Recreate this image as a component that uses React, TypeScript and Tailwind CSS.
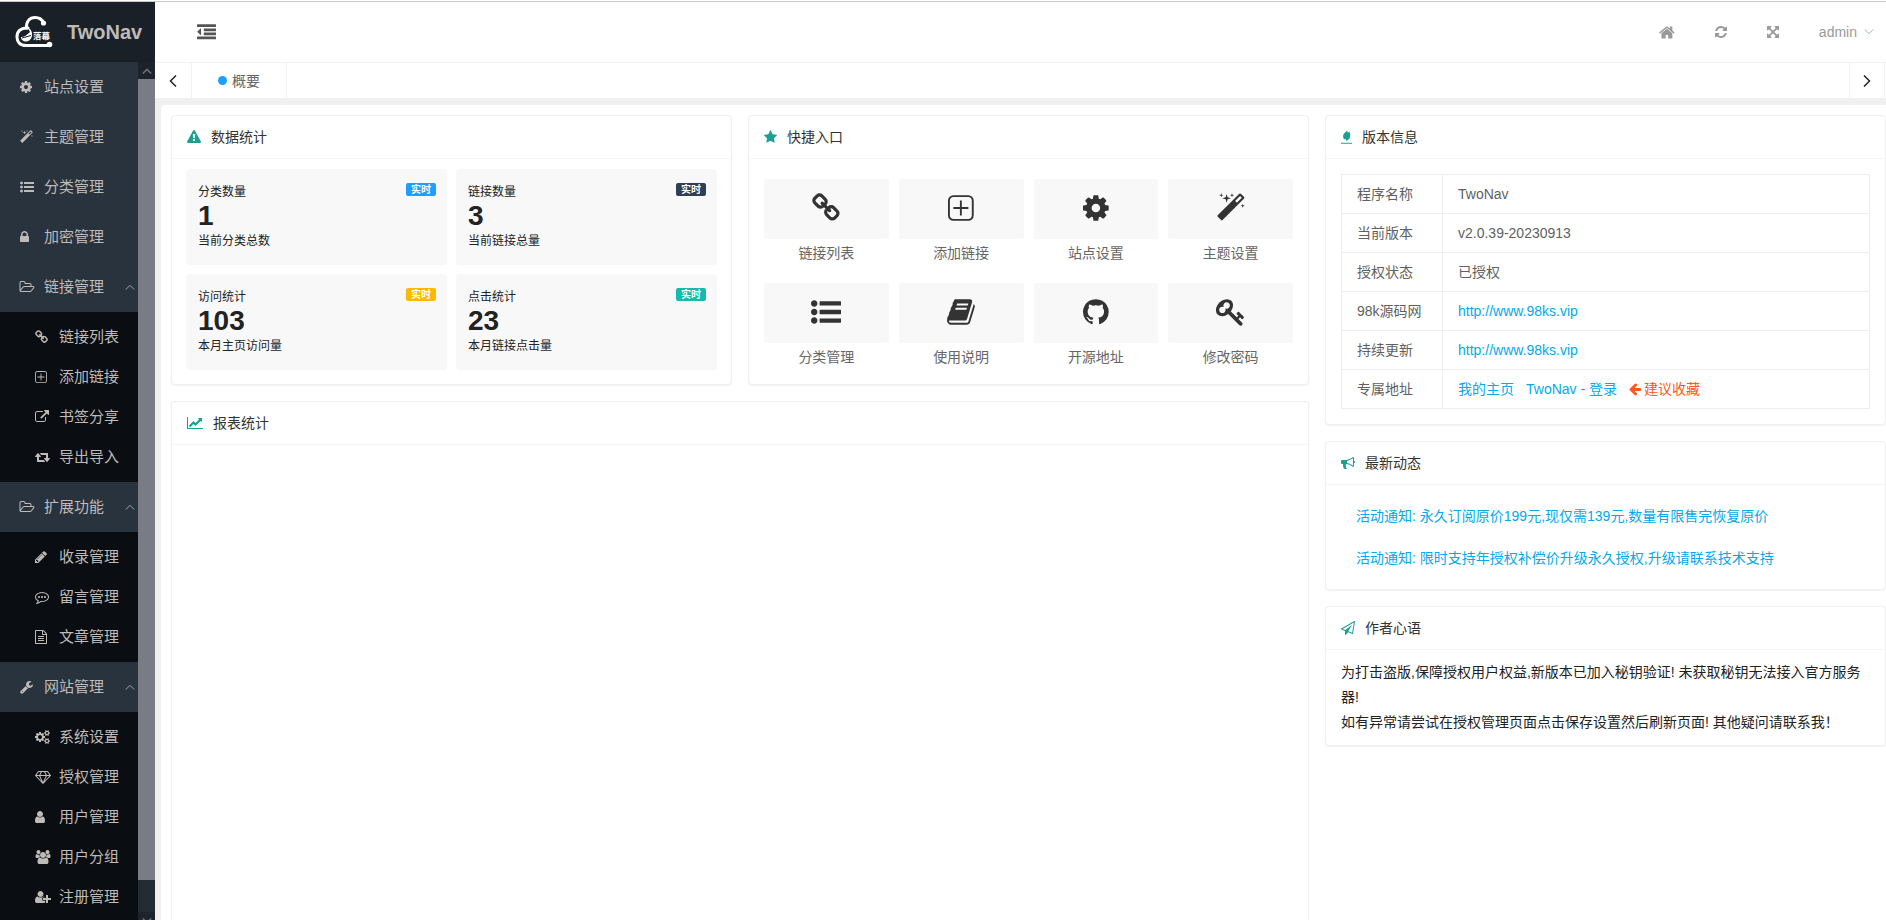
import React from "react";

type Glyph = { x?: number; w: number; d: string };

const G = {
  cog: { x: 128, w: 1536, d: "M1152 896q0-106-75-181t-181-75-181 75-75 181 75 181 181 75 181-75 75-181zm512-109v222q0 12-8 23t-20 13l-185 28q-19 54-39 91 35 50 107 138 10 12 10 25t-9 23q-27 37-99 108t-94 71q-12 0-26-9l-138-108q-44 23-91 38-16 136-29 186-7 28-36 28h-222q-14 0-24.500-8.500t-11.500-21.500l-28-184q-49-16-90-37l-141 107q-10 9-25 9-14 0-25-11-126-114-165-168-7-10-7-23 0-12 8-23 15-21 51-66.500t54-70.500q-27-50-41-99l-183-27q-13-2-21-12.500t-8-23.500v-222q0-12 8-23t19-13l186-28q14-46 39-92-40-57-107-138-10-12-10-24 0-10 9-23 26-36 98.500-107.500t94.500-71.500q13 0 26 10l138 107q44-23 91-38 16-136 29-186 7-28 36-28h222q14 0 24.500 8.500t11.500 21.500l28 184q49 16 90 37l142-107q9-9 24-9 13 0 25 10 129 119 165 170 7 8 7 22 0 12-8 23-15 21-51 66.500t-54 70.500q26 50 41 98l183 28q13 2 21 12.500t8 23.500z" },
  magic: { x: 64, w: 1664, d: "M1254 581l293-293-107-107-293 293zm447-293q0 27-18 45l-1286 1286q-18 18-45 18t-45-18l-198-198q-18-18-18-45t18-45l1286-1286q18-18 45-18t45 18l198 198q18 18 18 45zm-1351-190l98 30-98 30-30 98-30-98-98-30 98-30 30-98zm350 162l196 60-196 60-60 196-60-196-196-60 196-60 60-196zm930 478l98 30-98 30-30 98-30-98-98-30 98-30 30-98zm-640-640l98 30-98 30-30 98-30-98-98-30 98-30 30-98z" },
  list: { w: 1792, d: "M384 1408q0 80-56 136t-136 56-136-56-56-136 56-136 136-56 136 56 56 136zm0-512q0 80-56 136t-136 56-136-56-56-136 56-136 136-56 136 56 56 136zm1408 416v192q0 13-9.500 22.500t-22.500 9.500h-1216q-13 0-22.500-9.500t-9.500-22.500v-192q0-13 9.500-22.500t22.500-9.500h1216q13 0 22.500 9.500t9.500 22.500zm-1408-928q0 80-56 136t-136 56-136-56-56-136 56-136 136-56 136 56 56 136zm1408 416v192q0 13-9.500 22.500t-22.500 9.500h-1216q-13 0-22.500-9.500t-9.500-22.500v-192q0-13 9.500-22.500t22.500-9.500h1216q13 0 22.500 9.500t9.500 22.500zm0-512v192q0 13-9.500 22.500t-22.500 9.500h-1216q-13 0-22.500-9.500t-9.500-22.500v-192q0-13 9.500-22.500t22.500-9.500h1216q13 0 22.500 9.500t9.500 22.500z" },
  lock: { x: 320, w: 1152, d: "M640 768h512v-192q0-106-75-181t-181-75-181 75-75 181v192zm832 96v576q0 40-28 68t-68 28h-960q-40 0-68-28t-28-68v-576q0-40 28-68t68-28h32v-192q0-184 132-316t316-132 316 132 132 316v192h32q40 0 68 28t28 68z" },
  folder: { w: 1856, d: "M1717 931q0-35-53-35h-1088q-40 0-85.500 21.500t-71.500 52.500l-294 363q-18 24-18 40 0 35 53 35h1088q40 0 86-22t71-53l294-363q18-22 18-39zm-1141-163h768v-160q0-40-28-68t-68-28h-576q-40 0-68-28t-28-68v-64q0-40-28-68t-68-28h-320q-40 0-68 28t-28 68v853l256-315q44-53 116-87.500t140-34.500zm1269 163q0 62-46 120l-295 363q-43 53-116 87.500t-140 34.500h-1088q-92 0-158-66t-66-158v-960q0-92 66-158t158-66h320q92 0 158 66t66 158v32h544q92 0 158 66t66 158v160h192q54 0 99 24.500t67 70.500q15 32 15 68z" },
  link: { x: 64, w: 1664, d: "M1520 1216q0-40-28-68l-208-208q-28-28-68-28-42 0-72 32 3 3 19 18.500t21.500 21.500 15 19 13 25.500 3.500 27.500q0 40-28 68t-68 28q-15 0-27.500-3.500t-25.500-13-19-15-21.500-21.500-18.500-19q-33 31-33 73 0 40 28 68l206 207q27 27 68 27 40 0 68-26l147-146q28-28 28-67zm-703-705q0-40-28-68l-206-207q-28-28-68-28-39 0-68 27l-147 146q-28 28-28 67 0 40 28 68l208 208q27 27 68 27 42 0 72-31-3-3-19-18.500t-21.500-21.500-15-19-13-25.500-3.500-27.500q0-40 28-68t68-28q15 0 27.500 3.500t25.500 13 19 15 21.500 21.500 18.500 19q33-31 33-73zm895 705q0 120-85 203l-147 146q-83 83-203 83-121 0-204-85l-206-207q-83-83-83-203 0-123 88-209l-88-88q-86 88-208 88-120 0-204-84l-208-208q-84-84-84-204t85-203l147-146q83-83 203-83 121 0 204 85l206 207q83 83 83 203 0 123-88 209l88 88q86-88 208-88 120 0 204 84l208 208q84 84 84 204z" },
  plus: { x: 128, w: 1536, d: "M448 128h896q133 0 226.500 93.500t93.500 226.500v896q0 133-93.500 226.500t-226.500 93.500h-896q-133 0-226.500-93.500t-93.500-226.500v-896q0-133 93.500-226.500t226.500-93.500zm0 112q-87 0-147.500 60.500t-60.500 147.500v896q0 87 60.500 147.500t147.500 60.500h896q87 0 147.500-60.500t60.500-147.500v-896q0-87-60.500-147.500t-147.500-60.500zm392 208h112v392h392v112h-392v392h-112v-392h-392v-112h392z" },
  external: { w: 1792, d: "M1408 928v320q0 119-84.500 203.500t-203.500 84.500h-832q-119 0-203.500-84.500t-84.500-203.500v-832q0-119 84.500-203.500t203.500-84.500h704q14 0 23 9t9 23v64q0 14-9 23t-23 9h-704q-66 0-113 47t-47 113v832q0 66 47 113t113 47h832q66 0 113-47t47-113v-320q0-14 9-23t23-9h64q14 0 23 9t9 23zm384-864v512q0 26-19 45t-45 19-45-19l-176-176-652 652q-10 10-23 10t-23-10l-114-114q-10-10-10-23t10-23l652-652-176-176q-19-19-19-45t19-45 45-19h512q26 0 45 19t19 45z" },
  retweet: { w: 1920, d: "M1280 1504q0 13-9.500 22.500t-22.500 9.500h-960q-8 0-13.500-2t-9-7-5.500-8-3-11.500-1-11.500v-600h-192q-26 0-45-19t-19-45q0-24 15-41l320-384q19-22 49-22t49 22l320 384q15 17 15 41 0 26-19 45t-45 19h-192v384h576q16 0 25 11l160 192q7 10 7 21zm640-416q0 24-15 41l-320 384q-20 23-49 23t-49-23l-320-384q-15-17-15-41 0-26 19-45t45-19h192v-384h-576q-16 0-25-12l-160-192q-7-9-7-20 0-13 9.500-22.500t22.500-9.500h960q8 0 13.500 2t9 7 5.500 8 3 11.500 1 11.500v600h192q26 0 45 19t19 45z" },
  pencil: { x: 128, w: 1536, d: "M491 1536l91-91-235-235-91 91v107h128v128h107zm523-928q0-22-22-22-10 0-17 7l-542 542q-7 7-7 17 0 22 22 22 10 0 17-7l542-542q7-7 7-17zm-54-192l416 416-832 832h-416v-416zm683 96q0 53-37 90l-166 166-416-416 166-165q36-38 90-38 53 0 91 38l235 234q37 39 37 91z" },
  comment: { w: 1792, d: "M640 896q0 53-37.500 90.500t-90.500 37.500-90.500-37.500-37.500-90.500 37.500-90.500 90.500-37.500 90.500 37.500 37.500 90.500zm384 0q0 53-37.500 90.500t-90.500 37.500-90.500-37.500-37.500-90.500 37.500-90.500 90.500-37.500 90.500 37.500 37.500 90.500zm384 0q0 53-37.500 90.500t-90.500 37.500-90.500-37.500-37.500-90.500 37.500-90.500 90.500-37.500 90.500 37.500 37.500 90.500zm-512-512q-204 0-381.500 69.500t-282 187.500-104.500 255q0 112 71.500 213.500t201.500 175.500l87 50-27 96q-24 91-70 172 152-63 275-171l43-38 57 6q69 8 130 8 204 0 381.500-69.500t282-187.500 104.500-255-104.500-255-282-187.500-381.500-69.500zm896 512q0 174-120 321.500t-326 233-450 85.500q-70 0-145-8-198 175-460 242-49 14-114 22h-5q-15 0-27-10.500t-16-27.500v-1q-3-4-.5-12t2-10 4.500-9.500l6-9 7-8.500 8-9q7-8 31-34.500t34.500-38 31-39.500 32.500-51 27-59 26-76q-157-89-247.500-220t-90.500-281q0-130 71-248.500t191-204.500 286-136.500 348-50.500 348 50.500 286 136.500 191 204.500 71 248.500z" },
  file: { x: 128, w: 1536, d: "M1596 380q28 28 48 76t20 88v1152q0 40-28 68t-68 28h-1344q-40 0-68-28t-28-68v-1600q0-40 28-68t68-28h896q40 0 88 20t76 48zm-444-244v376h376q-10-29-22-41l-313-313q-12-12-41-22zm384 1528v-1024h-416q-40 0-68-28t-28-68v-416h-768v1536h1280zm-1024-864q0-14 9-23t23-9h704q14 0 23 9t9 23v64q0 14-9 23t-23 9h-704q-14 0-23-9t-9-23v-64zm736 224q14 0 23 9t9 23v64q0 14-9 23t-23 9h-704q-14 0-23-9t-9-23v-64q0-14 9-23t23-9h704zm0 256q14 0 23 9t9 23v64q0 14-9 23t-23 9h-704q-14 0-23-9t-9-23v-64q0-14 9-23t23-9h704z" },
  wrench: { x: 64, w: 1664, d: "M448 1472q0-26-19-45t-45-19-45 19-19 45 19 45 45 19 45-19 19-45zm644-420l-682 682q-37 37-90 37-52 0-91-37l-106-108q-38-36-38-90 0-53 38-91l681-681q39 98 114.500 173.500t173.500 114.500zm634-435q0 39-23 106-47 134-164.500 217.500t-258.500 83.500q-185 0-316.500-131.500t-131.500-316.500 131.500-316.500 316.500-131.500q58 0 121.500 16.500t107.500 46.500q16 11 16 28t-16 28l-293 169v224l193 107q5-3 79-48.500t135.500-81 70.500-35.500q15 0 23.500 10t8.500 25z" },
  cogs: { w: 1920, d: "M896 896q0-106-75-181t-181-75-181 75-75 181 75 181 181 75 181-75 75-181zm768 512q0-52-38-90t-90-38-90 38-38 90q0 53 37.500 90.500t90.500 37.500 90.500-37.500 37.500-90.500zm0-1024q0-52-38-90t-90-38-90 38-38 90q0 53 37.500 90.500t90.500 37.500 90.500-37.500 37.500-90.500zm-384 421v185q0 10-7 19.500t-16 10.500l-155 24q-11 35-32 76 34 48 90 115 7 11 7 20 0 12-7 19-23 30-82.500 89.500t-78.500 59.500q-11 0-21-7l-115-90q-37 19-77 31-11 108-23 155-7 24-30 24h-186q-11 0-20-7.500t-10-17.500l-23-153q-34-10-75-31l-118 89q-7 7-20 7-11 0-21-8-144-133-144-160 0-9 7-19 10-14 41-53t47-61q-23-44-35-82l-152-24q-10-1-17-9.500t-7-19.500v-185q0-10 7-19.500t16-10.500l155-24q11-35 32-76-34-48-90-115-7-11-7-20 0-12 7-20 22-30 82-89t79-59q11 0 21 7l115 90q34-18 77-32 11-108 23-154 7-24 30-24h186q11 0 20 7.500t10 17.500l23 153q34 10 75 31l118-89q8-7 20-7 11 0 21 8 144 133 144 160 0 8-7 19-12 16-42 54t-45 60q23 48 34 82l152 23q10 2 17 10.500t7 19.500zm640 533v140q0 16-149 31-12 27-30 52 51 113 51 138 0 4-4 7-122 71-124 71-8 0-46-47t-52-68q-20 2-30 2t-30-2q-14 21-52 68t-46 47q-2 0-124-71-4-3-4-7 0-25 51-138-18-25-30-52-149-15-149-31v-140q0-16 149-31 13-29 30-52-51-113-51-138 0-4 4-7 4-2 35-20t59-34 30-16q8 0 46 46.500t52 67.500q20-2 30-2t30 2q51-71 92-112l6-2q4 0 124 70 4 3 4 7 0 25-51 138 17 23 30 52 149 15 149 31zm0-1024v140q0 16-149 31-12 27-30 52 51 113 51 138 0 4-4 7-122 71-124 71-8 0-46-47t-52-68q-20 2-30 2t-30-2q-14 21-52 68t-46 47q-2 0-124-71-4-3-4-7 0-25 51-138-18-25-30-52-149-15-149-31v-140q0-16 149-31 13-29 30-52-51-113-51-138 0-4 4-7 4-2 35-20t59-34 30-16q8 0 46 46.500t52 67.500q20-2 30-2t30 2q51-71 92-112l6-2q4 0 124 70 4 3 4 7 0 25-51 138 17 23 30 52 149 15 149 31z" },
  diamond: { w: 2048, d: "M212 768l623 665-300-665h-323zm812 772l349-772h-698l349 772zm-486-900l204-384h-262l-288 384h346zm675 793l623-665h-323l-300 665zm-530-793h682l-204-384h-274l-204 384zm827 0h346l-288-384h-262l204 384zm141-486l384 512q14 18 13 41.500t-17 40.500l-960 1024q-18 20-47 20t-47-20l-960-1024q-16-17-17-40.500t13-41.500l384-512q18-26 51-26h1152q33 0 51 26z" },
  user: { x: 256, w: 1280, d: "M1536 1399q0 109-62.500 187t-150.500 78h-854q-88 0-150.500-78t-62.500-187q0-85 8.500-160.500t31.500-152 58.500-131 94-89 134.500-34.500q131 128 313 128t313-128q76 0 134.500 34.500t94 89 58.500 131 31.500 152 8.500 160.500zm-256-887q0 159-112.500 271.500t-271.500 112.500-271.500-112.500-112.500-271.500 112.500-271.500 271.500-112.500 271.500 112.500 112.500 271.500z" },
  users: { w: 2048, d: "M657 896q-162 5-265 128h-134q-82 0-138-40.500t-56-118.500q0-353 124-353 6 0 43.500 21t97.500 42.500 119 21.500q67 0 133-23-5 37-5 66 0 159 81 292zm1071 637q0 120-73 189.500t-194 69.500h-874q-121 0-194-69.500t-73-189.500q0-53 3.500-103.500t14-109 26.500-108.500 43-97.500 62-81 85.500-53.500 111.500-20q10 0 43 21.500t73 48 107 48 135 21.500 135-21.500 107-48 73-48 43-21.500q61 0 111.500 20t85.500 53.500 62 81 43 97.500 26.500 108.500 14 109 3.500 103.500zm-1024-1277q0 106-75 181t-181 75-181-75-75-181 75-181 181-75 181 75 75 181zm704 384q0 159-112.500 271.500t-271.500 112.500-271.500-112.500-112.500-271.500 112.500-271.500 271.500-112.500 271.500 112.500 112.500 271.500zm576 225q0 78-56 118.500t-138 40.500h-134q-103-123-265-128 81-133 81-292 0-29-5-66 66 23 133 23 59 0 119-21.500t97.500-42.500 43.500-21q124 0 124 353zm-128-609q0 106-75 181t-181 75-181-75-75-181 75-181 181-75 181 75 75 181z" },
  userPlus: { w: 2048, d: "M704 896q-159 0-271.500-112.500t-112.500-271.500 112.500-271.500 271.500-112.500 271.500 112.500 112.500 271.500-112.500 271.500-271.500 112.500zm960 128h352q13 0 22.500 9.500t9.500 22.500v192q0 13-9.500 22.500t-22.500 9.500h-352v352q0 13-9.500 22.500t-22.500 9.500h-192q-13 0-22.500-9.500t-9.500-22.500v-352h-352q-13 0-22.500-9.500t-9.500-22.500v-192q0-13 9.500-22.500t22.500-9.500h352v-352q0-13 9.500-22.500t22.500-9.500h192q13 0 22.500 9.500t9.500 22.500v352zm-736 224q0 52 38 90t90 38h256v238q-68 50-171 50h-874q-121 0-194-69t-73-190q0-53 3.500-103.500t14-109 26.500-108.500 43-97.500 62-81 85.500-53.500 111.500-20q19 0 39 17 79 61 154.500 91.500t164.500 30.500 164.500-30.500 154.500-91.500q20-17 39-17 132 0 217 96h-223q-52 0-90 38t-38 90v192z" },
  warning: { w: 1792, d: "M1024 1375v-190q0-14-9.500-23.500t-22.500-9.500h-192q-13 0-22.500 9.500t-9.500 23.500v190q0 14 9.500 23.500t22.500 9.500h192q13 0 22.500-9.500t9.500-23.500zm-2-374l18-459q0-12-10-19-13-11-24-11h-220q-11 0-24 11-10 7-10 21l17 457q0 10 10 16.500t24 6.500h185q14 0 23.500-6.500t10.500-16.500zm-14-934l768 1408q35 63-2 126-17 29-46.500 46t-63.500 17h-1536q-34 0-63.500-17t-46.500-46q-37-63-2-126l768-1408q17-31 47-49t65-18 65 18 47 49z" },
  star: { x: 64, w: 1664, d: "M1728 647q0 22-26 48l-363 354 86 500q1 7 1 20 0 21-10.500 35.500t-30.500 14.500q-19 0-40-12l-449-236-449 236q-22 12-40 12-21 0-31.500-14.500t-10.500-35.500q0-6 2-20l86-500-364-354q-25-27-25-48 0-37 56-46l502-73 225-455q19-41 49-41t49 41l225 455 502 73q56 9 56 46z" },
  chart: { w: 2048, d: "M2048 1536v128h-2048v-1536h128v1408h1920zm-128-1248v435q0 21-19.500 29.500t-35.500-7.500l-121-121-633 633q-10 10-23 10t-23-10l-233-233-416 416-192-192 585-585q10-10 23-10t23 10l233 233 464-464-121-121q-16-16-7.500-35.500t29.500-19.500h435q14 0 23 9t9 23z" },
  fire: { x: 192, w: 1408, d: "M192 1640h1408v128h-1408zM1010 20C985 190 1010 260 1090 360C1150 280 1200 240 1290 190C1260 330 1400 500 1380 760C1360 1060 1140 1290 800 1420C850 1290 830 1200 740 1120C690 1170 640 1200 560 1230C560 1100 440 960 460 740C490 430 740 330 1010 20z" },
  bullhorn: { w: 1792, d: "M1664 640q53 0 90.500 37.500t37.500 90.500-37.500 90.500-90.500 37.500v384q0 52-38 90t-90 38q-417-347-812-380-58 19-91 66t-31 100.500 40 92.500q-20 33-23 65.500t6 58 33.500 55 48 50 61.500 50.500q-29 58-111.500 83t-168.500 11.500-132-55.500q-7-23-29.500-87.500t-32-94.500-23-89-15-101 3.500-98.500 22-110.500h-122q-66 0-113-47t-47-113v-192q0-66 47-113t113-47h480q435 0 896-384 52 0 90 38t38 90v384zm-128 604v-954q-394 302-768 343v270q377 42 768 341z" },
  plane: { w: 1792, d: "M1764 11q33 24 27 64l-256 1536q-5 29-32 45-14 8-31 8-11 0-24-5l-527-215-298 327q-18 21-47 21-14 0-23-4-19-7-30-23.500t-11-36.500v-452l-472-193q-37-14-40-55-3-39 32-59l1664-960q35-21 68 2zm-342 1499l221-1323-1434 827 336 137 863-639-478 797z" },
  home: { x: 64, w: 1664, d: "M1472 992v480q0 26-19 45t-45 19h-384v-384h-256v384h-384q-26 0-45-19t-19-45v-480q0-1 .5-3t.5-3l575-474 575 474q1 2 1 6zm223-69l-62 74q-8 9-21 11h-3q-13 0-21-7l-692-577-692 577q-12 8-24 7-13-2-21-11l-62-74q-8-10-7-23.500t11-21.500l719-599q32-26 76-26t76 26l244 204v-195q0-14 9-23t23-9h192q14 0 23 9t9 23v408l219 182q10 8 11 21.500t-7 23.500z" },
  refresh: { x: 128, w: 1536, d: "M1639 1056q0 5-1 7-64 268-268 434.500t-478 166.500q-146 0-282.500-55t-243.500-157l-129 129q-19 19-45 19t-45-19-19-45v-448q0-26 19-45t45-19h448q26 0 45 19t19 45-19 45l-137 137q71 66 161 102t187 36q134 0 250-65t186-179q11-17 53-117 8-23 30-23h192q13 0 22.500 9.500t9.500 22.500zm25-800v448q0 26-19 45t-45 19h-448q-26 0-45-19t-19-45 19-45l138-138q-148-137-349-137-134 0-250 65t-186 179q-11 17-53 117-8 23-30 23h-199q-13 0-22.500-9.500t-9.500-22.500v-7q65-268 270-434.500t480-166.500q146 0 284 55.500t245 156.500l130-129q19-19 45-19t45 19 19 45z" },
  arrows: { x: 128, w: 1536, d: "M1411 541l-355 355 355 355 144-144q29-31 70-14 39 17 39 59v448q0 26-19 45t-45 19h-448q-42 0-59-40-17-39 14-69l144-144-355-355-355 355 144 144q31 30 14 69-17 40-59 40h-448q-26 0-45-19t-19-45v-448q0-42 40-59 39-17 69 14l144 144 355-355-355-355-144 144q-19 19-45 19-12 0-24-5-40-17-40-59v-448q0-26 19-45t45-19h448q42 0 59 40 17 39-14 69l-144 144 355 355 355-355-144-144q-31-30-14-69 17-40 59-40h448q26 0 45 19t19 45v448q0 42-39 59-13 5-25 5-26 0-45-19z" },
  outdent: { w: 1792, d: "M384 544v576q0 13-9.500 22.500t-22.500 9.500q-14 0-23-9l-288-288q-9-9-9-23t9-23l288-288q9-9 23-9 13 0 22.500 9.500t9.500 22.500zm1408 768v192q0 13-9.500 22.500t-22.500 9.500h-1728q-13 0-22.500-9.500t-9.500-22.500v-192q0-13 9.500-22.500t22.500-9.500h1728q13 0 22.500 9.500t9.500 22.500zm0-384v192q0 13-9.500 22.500t-22.500 9.500h-1088q-13 0-22.500-9.500t-9.500-22.500v-192q0-13 9.500-22.500t22.500-9.500h1088q13 0 22.500 9.500t9.500 22.500zm0-384v192q0 13-9.500 22.500t-22.500 9.500h-1088q-13 0-22.500-9.500t-9.500-22.500v-192q0-13 9.500-22.500t22.500-9.500h1088q13 0 22.500 9.500t9.500 22.500zm0-384v192q0 13-9.500 22.500t-22.500 9.500h-1728q-13 0-22.500-9.500t-9.500-22.500v-192q0-13 9.500-22.500t22.500-9.500h1728q13 0 22.500 9.500t9.500 22.500z" },
  github: { x: 128, w: 1536, d: "M896 128q209 0 385.500 103t279.500 279.500 103 385.500q0 251-146.500 451.500t-378.500 277.500q-27 5-40-7t-13-30q0-3 .5-76.500t.5-134.500q0-97-52-142 57-6 102.500-18t94-39 81-66.500 53-105 20.500-150.500q0-119-79-206 37-91-8-204-28-9-81 11t-92 44l-38 24q-93-26-192-26t-192 26q-16-11-42.500-27t-83.500-38.500-85-13.500q-45 113-8 204-79 87-79 206 0 85 20.500 150t52.500 105 80.500 67 94 39 102.500 18q-39 36-49 103-21 10-45 15t-57 5-65.500-21.500-55.500-62.500q-19-32-48.500-52t-49.500-24l-20-3q-21 0-29 4.500t-5 11.500 9 14 13 12l7 5q22 10 43.500 38t31.500 51l10 23q13 38 44 61.500t67 30 69.500 7 55.500-3.500l23-4q0 38 .5 88.500t.5 54.500q0 18-13 30t-40 7q-232-77-378.500-277.500t-146.500-451.500q0-209 103-385.500t279.500-279.500 385.500-103z" },
  key: { x: 64, w: 1664, d: "M832 512q0-80-56-136t-136-56-136 56-56 136q0 42 19 83-41-19-83-19-80 0-136 56t-56 136 56 136 136 56 136-56 56-136q0-42-19-83 41 19 83 19 80 0 136-56t56-136zm851 704q0 17-49 66t-66 49q-9 0-28.500-16t-36.500-33-38.500-40-24.500-26l-96 96 220 220q28 28 28 68 0 42-39 81t-81 39q-40 0-68-28l-671-671q-176 131-365 131-163 0-265.500-102.500t-102.500-265.500q0-160 95-313t248-248 313-95q163 0 265.500 102.500t102.500 265.500q0 189-131 365l355 355 96-96q-3-3-26-24.500t-40-38.500-33-36.500-16-28.500q0-17 49-66t66-49q13 0 23 10 6 6 46 44.500t82 79.500 86.500 86 73 78 28.500 41z" },
  book: { x: 64, w: 1664, d: "M1703 478q40 57 18 129l-275 906q-19 64-76.500 107.500t-122.500 43.500h-923q-77 0-148.500-53.500t-99.500-131.500q-24-67-2-127 0-4 3-27t4-37q1-8-3-21.500t-3-19.500q2-11 8-21t16.500-23.500 16.500-23.500q23-38 45-91.500t30-91.500q3-10 .5-30t-.5-28q3-11 17-28t17-23q21-36 42-92t25-90q1-9-2.500-32t.5-28q4-13 22-30.500t22-22.500q19-26 42.500-84.500t27.500-96.500q1-8-3-25.500t-2-26.500q2-8 9-18t18-23 17-21q8-12 16.500-30.500t15-35 16-36 19.500-32 26.500-23.500 36-11.500 47.500 5.500l-1 3q38-9 51-9h761q74 0 114 56t18 130l-274 906q-36 119-71.500 153.500t-128.500 34.500h-869q-27 0-38 15-11 16-1 43 24 70 144 70h923q29 0 56-15.500t35-41.500l300-987q7-22 5-57 38 15 59 43zm-1064 2q-4 13 2 22.500t20 9.500h608q13 0 25.500-9.500t16.500-22.500l21-64q4-13-2-22.500t-20-9.500h-608q-13 0-25.500 9.500t-16.500 22.500zm-83 256q-4 13 2 22.500t20 9.500h608q13 0 25.500-9.500t16.500-22.500l21-64q4-13-2-22.500t-20-9.500h-608q-13 0-25.500 9.500t-16.500 22.500z" },
  arrowLeft: { x: 128, w: 1536, d: "M1664 896v128q0 53-32.500 90.500t-84.500 37.500h-704l293 294q38 36 38 90t-38 90l-75 76q-37 37-90 37-52 0-91-37l-651-652q-37-37-37-90 0-52 37-91l651-650q38-38 91-38 52 0 90 38l75 74q38 38 38 91t-38 91l-293 293h704q52 0 84.500 37.500t32.500 90.500z" },
} satisfies Record<string, Glyph>;

type IconName = keyof typeof G;

function Icon({ name, className = "h-[14px]" }: { name: IconName; className?: string }) {
  const g: Glyph = G[name];
  return (
    <svg
      viewBox={`${g.x ?? 0} 0 ${g.w} 1792`}
      className={`${className} w-auto shrink-0 overflow-visible fill-current`}
      aria-hidden="true"
    >
      <path d={g.d} />
    </svg>
  );
}

function Chevron({ d, className }: { d: string; className: string }) {
  return (
    <svg viewBox="0 0 12 12" className={`${className} fill-none stroke-current`} aria-hidden="true">
      <path d={d} />
    </svg>
  );
}

const UP = "M1 9L6 4L11 9";
const DOWN = "M1 3L6 8L11 3";
const LEFT = "M9 0.500L3.500 6L9 11.500";
const RIGHT = "M3 0.500L8.500 6L3 11.500";

type Entry = { icon: IconName; label: string; children?: { icon: IconName; label: string }[] };

const MENU: Entry[] = [
  { icon: "cog", label: "站点设置" },
  { icon: "magic", label: "主题管理" },
  { icon: "list", label: "分类管理" },
  { icon: "lock", label: "加密管理" },
  {
    icon: "folder",
    label: "链接管理",
    children: [
      { icon: "link", label: "链接列表" },
      { icon: "plus", label: "添加链接" },
      { icon: "external", label: "书签分享" },
      { icon: "retweet", label: "导出导入" },
    ],
  },
  {
    icon: "folder",
    label: "扩展功能",
    children: [
      { icon: "pencil", label: "收录管理" },
      { icon: "comment", label: "留言管理" },
      { icon: "file", label: "文章管理" },
    ],
  },
  {
    icon: "wrench",
    label: "网站管理",
    children: [
      { icon: "cogs", label: "系统设置" },
      { icon: "diamond", label: "授权管理" },
      { icon: "user", label: "用户管理" },
      { icon: "users", label: "用户分组" },
      { icon: "userPlus", label: "注册管理" },
    ],
  },
];

function Logo() {
  return (
    <svg viewBox="0 0 40 34" className="h-[34px] w-10 shrink-0" aria-hidden="true">
      <g fill="none" stroke="#fff" strokeWidth="3" strokeLinecap="round">
        <path d="M12.500 13C12 6 16 2.500 21 2.500C25 2.500 28 4 29.500 8" />
        <path d="M14 13C6 12.500 3 17 3 22C3 27 6 30.500 12 30.500H36" />
      </g>
      <circle cx="29.500" cy="8" r="2.600" fill="#fff" />
      <circle cx="35.500" cy="29.500" r="2.800" fill="#fff" />
      <path d="M14 13C17 14 18.500 17 18 21C17 25 14 27 11 26.500C8 26 7 24 7 22C10 22 13 20 16 17Z" fill="#fff" />
      <path d="M8 23L17 20.500" stroke="#192027" strokeWidth="1" />
      <text x="19" y="24" fontSize="8.500" fontWeight="700" fill="#fff" fontFamily="Noto Sans CJK SC, sans-serif">
        落幕
      </text>
    </svg>
  );
}

function Sidebar() {
  return (
    <aside className="flex w-[155px] shrink-0 flex-col bg-[#28333e] text-[#bfbbb9]">
      <div className="flex h-[60px] shrink-0 items-center gap-[13px] bg-[#192027] pl-[14px]">
        <Logo />
        <h1 className="text-xl font-bold">TwoNav</h1>
      </div>
      <div className="flex min-h-0 flex-1">
        <nav className="min-w-0 flex-1 overflow-hidden text-[15px]">
          <ul>
            {MENU.map((m) => (
              <li key={m.label}>
                <a href="#" className="flex h-[50px] items-center pl-5 pr-[3px]">
                  <span className="flex w-6 shrink-0">
                    <Icon name={m.icon} />
                  </span>
                  <span className="flex-1 whitespace-nowrap">{m.label}</span>
                  {m.children && <Chevron d={UP} className="h-[10px] w-[10px]" />}
                </a>
                {m.children && (
                  <ul className="bg-[#0a0d11] py-[5px]">
                    {m.children.map((c) => (
                      <li key={c.label}>
                        <a href="#" className="flex h-10 items-center pl-[35px]">
                          <span className="flex w-6 shrink-0">
                            <Icon name={c.icon} />
                          </span>
                          <span className="whitespace-nowrap">{c.label}</span>
                        </a>
                      </li>
                    ))}
                  </ul>
                )}
              </li>
            ))}
          </ul>
        </nav>
        <div className="flex w-[17px] shrink-0 flex-col bg-[#232b33] text-[#6b7078]" aria-hidden="true">
          <div className="flex h-[17px] items-center justify-center bg-[#1e232b]">
            <Chevron d={UP} className="h-[10px] w-[10px] stroke-2" />
          </div>
          <div className="mb-8 flex-1 bg-[#797c85]" />
          <div className="flex h-2 items-start justify-center overflow-hidden bg-[#1e232b] pt-1">
            <Chevron d={DOWN} className="h-[10px] w-[10px] shrink-0 stroke-2" />
          </div>
        </div>
      </div>
    </aside>
  );
}

function Card({
  icon,
  title,
  className = "",
  children,
}: {
  icon: IconName;
  title: string;
  className?: string;
  children?: React.ReactNode;
}) {
  return (
    <section className={`rounded border border-[#f0f0f0] bg-white shadow-[0_1px_2px_rgba(0,0,0,0.05)] ${className}`}>
      <h2 className="flex h-[43px] items-center gap-[10px] border-b border-[#f6f6f6] px-[15px] text-sm text-[#333]">
        <span className="text-[#1aa094]">
          <Icon name={icon} />
        </span>
        {title}
      </h2>
      {children}
    </section>
  );
}

const STATS = [
  { title: "分类数量", value: "1", note: "当前分类总数", tone: "bg-[#1e9fff]" },
  { title: "链接数量", value: "3", note: "当前链接总量", tone: "bg-[#2f4056]" },
  { title: "访问统计", value: "103", note: "本月主页访问量", tone: "bg-[#ffb800]" },
  { title: "点击统计", value: "23", note: "本月链接点击量", tone: "bg-[#16baaa]" },
];

const SHORTCUTS: { icon: IconName; label: string }[] = [
  { icon: "link", label: "链接列表" },
  { icon: "plus", label: "添加链接" },
  { icon: "cog", label: "站点设置" },
  { icon: "magic", label: "主题设置" },
  { icon: "list", label: "分类管理" },
  { icon: "book", label: "使用说明" },
  { icon: "github", label: "开源地址" },
  { icon: "key", label: "修改密码" },
];

const LINK = "text-[#01aaed]";

const INFO: [string, React.ReactNode][] = [
  ["程序名称", "TwoNav"],
  ["当前版本", "v2.0.39-20230913"],
  ["授权状态", "已授权"],
  ["98k源码网", <a href="#" className={LINK}>http://www.98ks.vip</a>],
  ["持续更新", <a href="#" className={LINK}>http://www.98ks.vip</a>],
  [
    "专属地址",
    <div className="flex items-center gap-3">
      <a href="#" className={LINK}>我的主页</a>
      <a href="#" className={LINK}>TwoNav - 登录</a>
      <span className="flex items-center gap-[3px] text-[#ff5722]">
        <Icon name="arrowLeft" />
        建议收藏
      </span>
    </div>,
  ],
];

export default function App() {
  return (
    <div className="flex h-screen flex-col overflow-hidden bg-white font-['Liberation_Sans','Noto_Sans_CJK_SC',sans-serif] text-sm text-[#222]">
      <div className="h-[2px] shrink-0 border-b border-[#c8c8c8]" />
      <div className="flex min-h-0 flex-1">
        <Sidebar />
        <div className="flex min-w-0 flex-1 flex-col">
          <header className="flex h-[61px] shrink-0 items-center justify-between border-b border-[#f2f2f2] pl-[42px] pr-3 text-[#999]">
            <button type="button" aria-label="收起菜单" className="text-[#555]">
              <Icon name="outdent" className="h-[19px]" />
            </button>
            <div className="flex items-center gap-10">
              <button type="button" aria-label="主页"><Icon name="home" className="h-[17px]" /></button>
              <button type="button" aria-label="刷新"><Icon name="refresh" /></button>
              <button type="button" aria-label="全屏"><Icon name="arrows" /></button>
              <button type="button" className="flex items-center gap-[7px]">
                admin
                <Chevron d={DOWN} className="h-[10px] w-[10px]" />
              </button>
            </div>
          </header>
          <div className="flex h-[35px] shrink-0 pr-px">
            <button type="button" aria-label="向左" className="flex w-[37px] items-center justify-center border-r border-[#f2f2f2]">
              <Chevron d={LEFT} className="h-3 w-3 stroke-[1.5]" />
            </button>
            <button type="button" className="flex items-center gap-[5px] border-r border-[#f2f2f2] px-[26px] text-[#666]">
              <span className="size-[9px] rounded-full bg-[#1e9fff]" />
              概要
            </button>
            <div className="flex-1" />
            <button type="button" aria-label="向右" className="flex w-9 items-center justify-center border-x border-[#f2f2f2]">
              <Chevron d={RIGHT} className="h-3 w-3 stroke-[1.5]" />
            </button>
          </div>
          <div className="flex min-h-0 flex-1 bg-[#f0f0f0] pl-[6px] pt-[7px]">
            <main className="grid min-w-0 flex-1 grid-cols-3 gap-4 rounded-tl bg-white pl-[10px] pt-[10px]">
              <div className="col-span-2 flex min-w-0 flex-col gap-4">
                <div className="grid grid-cols-2 gap-4">
                  <Card icon="warning" title="数据统计">
                    <div className="grid grid-cols-2 gap-[9px] px-[14px] pb-[14px] pt-[10px]">
                      {STATS.map((s) => (
                        <div key={s.title} className="flex h-24 items-start justify-between rounded bg-[#f8f8f8] pl-3 pr-[11px] pt-[14px]">
                          <div className="pt-px text-xs leading-4">
                            <h3>{s.title}</h3>
                            <p className="text-[28px] font-bold leading-8">{s.value}</p>
                            <p className="leading-[18px]">{s.note}</p>
                          </div>
                          <span className={`rounded-xs px-[5px] text-[10px] font-bold leading-[13px] text-white ${s.tone}`}>
                            实时
                          </span>
                        </div>
                      ))}
                    </div>
                  </Card>
                  <Card icon="star" title="快捷入口">
                    <ul className="grid grid-cols-4 gap-x-[10px] gap-y-5 px-[15px] pt-5">
                      {SHORTCUTS.map((s) => (
                        <li key={s.label}>
                          <a href="#" className="flex flex-col text-center text-[#666]">
                            <span className="flex h-[60px] items-center justify-center rounded-xs bg-[#f8f8f8] pb-[2px] text-[#333]">
                              <Icon name={s.icon} className="h-[30px]" />
                            </span>
                            <span className="pt-1 leading-5">{s.label}</span>
                          </a>
                        </li>
                      ))}
                    </ul>
                  </Card>
                </div>
                <Card icon="chart" title="报表统计" className="flex-1 rounded-b-none border-b-0" />
              </div>
              <div className="flex min-w-0 flex-col gap-4">
                <Card icon="fire" title="版本信息">
                  <div className="p-[15px]">
                    <table className="w-full border-collapse text-left text-[#5f5f5f]">
                      <tbody>
                        {INFO.map(([k, v]) => (
                          <tr key={k} className="h-[39px]">
                            <th scope="row" className="w-[101px] whitespace-nowrap border border-[#eee] px-[15px] font-normal">{k}</th>
                            <td className="border border-[#eee] px-[15px]">{v}</td>
                          </tr>
                        ))}
                      </tbody>
                    </table>
                  </div>
                </Card>
                <Card icon="bullhorn" title="最新动态">
                  <ul className={`px-[30px] py-[10px] leading-[42px] ${LINK}`}>
                    <li><a href="#">活动通知: 永久订阅原价199元,现仅需139元,数量有限售完恢复原价</a></li>
                    <li><a href="#">活动通知: 限时支持年授权补偿价升级永久授权,升级请联系技术支持</a></li>
                  </ul>
                </Card>
                <Card icon="plane" title="作者心语">
                  <div className="px-[15px] py-[10px] leading-[25px]">
                    <p>为打击盗版,保障授权用户权益,新版本已加入秘钥验证! 未获取秘钥无法接入官方服务器!</p>
                    <p>如有异常请尝试在授权管理页面点击保存设置然后刷新页面! 其他疑问请联系我！</p>
                  </div>
                </Card>
              </div>
            </main>
          </div>
        </div>
      </div>
    </div>
  );
}
